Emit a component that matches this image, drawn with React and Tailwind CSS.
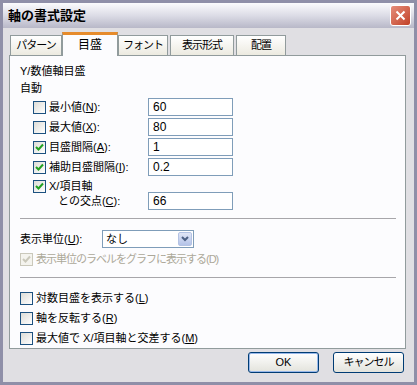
import React from 'react';

const jp = { fontFamily: '"Liberation Sans", "Noto Sans CJK JP", sans-serif' };

const Check = ({ checked, disabled }) => (
  <span
    className={`inline-flex h-[13px] w-[13px] shrink-0 items-center justify-center border ${
      disabled ? 'border-[#cac8bb] bg-[#f4f3ee]' : 'border-[#1c5180] bg-gradient-to-br from-[#dcdcd7] to-[#ffffff]'
    }`}
  >
    {checked && (
      <svg width="9" height="9" viewBox="0 0 9 9">
        <path
          d="M1 4 L3.5 6.5 L8 1.5"
          fill="none"
          stroke={disabled ? '#cac8bb' : '#21a121'}
          strokeWidth="2"
        />
      </svg>
    )}
  </span>
);

const Field = ({ value }) => (
  <div className="flex h-[18px] w-[85px] items-center border border-[#7f9db9] bg-white px-[4px] text-[12px] text-black">
    {value}
  </div>
);

const Tab = ({ label, active, w }) =>
  active ? (
    <div className="relative z-10 -mx-[2px] -mb-px flex h-[24px] w-[56px] items-center justify-center border-x border-t-[3px] border-x-[#919b9c] border-t-[#e68b2c] bg-[#fcfcfe] pb-[1px] text-[12px]">
      {label}
    </div>
  ) : (
    <div
      className={`mt-[3px] flex h-[20px] items-center justify-center border-x border-t border-[#919b9c] bg-gradient-to-b from-white to-[#eceae0] tracking-[-1px] ${w}`}
    >
      {label}
    </div>
  );

const Row = ({ checked, label, value }) => (
  <div className="flex h-[20px] items-center">
    <div className="flex w-[128px] items-center gap-[3px] whitespace-nowrap pl-[13px]">
      <Check checked={checked} />
      <span>{label}</span>
    </div>
    <Field value={value} />
  </div>
);

export default function App() {
  return (
    <div style={jp} className="flex h-[385px] w-[417px] flex-col border-[3px] border-[#8f8fa8] bg-[#e0dfe3] text-[11px] text-black">
      {/* title bar */}
      <div className="flex h-[25px] items-center justify-between bg-gradient-to-b from-[#fbfbfd] via-[#dcdce6] to-[#b8b8c8] pl-[5px] pr-[3px]">
        <span className="text-[13px] font-bold text-[#000]">軸の書式設定</span>
        <div className="flex h-[21px] w-[21px] items-center justify-center rounded-[3px] border border-white bg-gradient-to-br from-[#e58d7a] to-[#c13f25]">
          <svg width="11" height="11" viewBox="0 0 11 11">
            <path d="M1.5 1.5 L9.5 9.5 M9.5 1.5 L1.5 9.5" stroke="#fff" strokeWidth="2" />
          </svg>
        </div>
      </div>

      <div className="flex flex-1 flex-col px-[6px] pt-[4px]">
        {/* tabs */}
        <div className="flex items-end gap-[2px] pl-[1px]">
          <Tab label="パターン" w="w-[52px]" />
          <Tab label="目盛" active />
          <Tab label="フォント" w="w-[50px]" />
          <Tab label="表示形式" w="w-[64px]" />
          <Tab label="配置" w="w-[50px]" />
        </div>

        {/* panel */}
        <div className="flex h-[294px] w-[397px] flex-col border border-[#919b9c] bg-[#fcfcfe] pl-[10px] pr-[9px] pt-[7px]">
          <div className="h-[17px]">Y/数値軸目盛</div>
          <div className="h-[15px]">自動</div>
          <div className="mt-[2px]">
            <Row label={<>最小値(<u>N</u>):</>} value="60" />
            <Row label={<>最大値(<u>X</u>):</>} value="80" />
            <Row checked label={<>目盛間隔(<u>A</u>):</>} value="1" />
            <Row checked label={<>補助目盛間隔(<u>I</u>):</>} value="0.2" />
            <div className="mt-[1px] flex h-[32px] items-end">
              <div className="flex w-[128px] flex-col whitespace-nowrap pl-[13px] leading-[15px]">
                <div className="flex items-center gap-[3px]">
                  <Check checked />
                  <span>X/項目軸</span>
                </div>
                <div className="pb-[1px] pl-[25px]">との交点(<u>C</u>):</div>
              </div>
              <Field value="66" />
            </div>
          </div>

          <div className="mt-[8px] h-px bg-[#a7a6aa]" />

          <div className="mt-[11px] flex h-[18px] items-center">
            <span className="w-[82px]">表示単位(<u>U</u>):</span>
            <div className="flex h-[18px] w-[92px] items-center border border-[#7f9db9] bg-white pl-[3px]">
              <span className="flex-1">なし</span>
              <div className="mr-px flex h-[14px] w-[14px] items-center justify-center rounded-[2px] border border-[#b4c3e4] bg-gradient-to-b from-[#e1e6f6] to-[#b4c3e8]">
                <svg width="8" height="6" viewBox="0 0 8 6">
                  <path d="M1 1 L4 4 L7 1" fill="none" stroke="#4d6185" strokeWidth="2" />
                </svg>
              </div>
            </div>
          </div>
          <div className="mt-[3px] flex h-[16px] items-center gap-[3px] whitespace-nowrap text-[#aca899]">
            <Check checked disabled />
            <span className="tracking-[-1px]">表示単位のラベルをグラフに表示する(D)</span>
          </div>

          <div className="mt-[10px] h-px bg-[#a7a6aa]" />

          <div className="mt-[10px] flex flex-col">
            <div className="flex h-[20px] items-center gap-[3px]">
              <Check />
              <span>対数目盛を表示する(<u>L</u>)</span>
            </div>
            <div className="flex h-[20px] items-center gap-[3px]">
              <Check />
              <span>軸を反転する(<u>R</u>)</span>
            </div>
            <div className="flex h-[20px] items-center gap-[3px]">
              <Check />
              <span>最大値で X/項目軸と交差する(<u>M</u>)</span>
            </div>
          </div>
        </div>

        {/* buttons */}
        <div className="mt-[3px] flex justify-end gap-[14px] pr-[4px]">
          <button className="h-[21px] w-[71px] rounded-[3px] border border-[#003c74] bg-gradient-to-b from-white to-[#e3e3dc] text-[11px] shadow-[inset_0_0_0_1px_#98b8ea]">
            OK
          </button>
          <button className="h-[21px] w-[71px] rounded-[3px] border border-[#003c74] bg-gradient-to-b from-white to-[#e3e3dc] text-[11px] tracking-[-1px]">
            キャンセル
          </button>
        </div>
      </div>
    </div>
  );
}
